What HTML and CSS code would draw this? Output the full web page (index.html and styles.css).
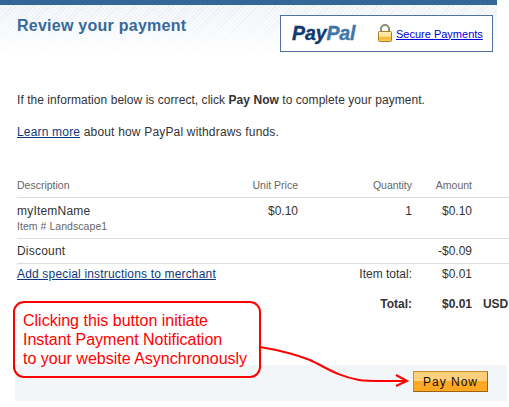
FILE: index.html
```html
<!DOCTYPE html>
<html lang="en">
<head>
<meta charset="utf-8">
<title>Review your payment</title>
<link rel="stylesheet" href="styles.css">
</head>
<body>
<div class="page">
  <header class="head">
    <h1>Review your payment</h1>
    <div class="brand">
      <span class="logo"><span class="pay">Pay</span><span class="pal">Pal</span></span>
      <svg class="lock" width="16" height="19" viewBox="0 0 16 19" aria-hidden="true">
        <defs>
          <linearGradient id="lk" x1="0" y1="0" x2="0" y2="1">
            <stop offset="0" stop-color="#fff0b8"/><stop offset=".5" stop-color="#fde08a"/>
            <stop offset=".55" stop-color="#f8b52c"/><stop offset="1" stop-color="#fbd060"/>
          </linearGradient>
        </defs>
        <path d="M4 8V5a4 4 0 0 1 8 0v3" fill="none" stroke="#8c8c78" stroke-width="2"/>
        <rect x="1.500" y="7.500" width="13" height="10" rx="1" fill="url(#lk)" stroke="#a8802c"/>
      </svg>
      <a class="secure" href="#">Secure Payments</a>
    </div>
  </header>
  <main class="body">
    <p class="intro">If the information below is correct, click <b>Pay Now</b> to complete your payment.</p>
    <p class="learn"><a href="#">Learn more</a> about how PayPal withdraws funds.</p>
    <div class="tbl">
      <div class="row hdr">
        <span>Description</span><span class="r">Unit Price</span><span class="r">Quantity</span><span class="r">Amount</span><span></span>
      </div>
      <div class="row item">
        <span><span class="name">myItemName</span><small>Item # Landscape1</small></span><span class="r">$0.10</span><span class="r">1</span><span class="r">$0.10</span><span></span>
      </div>
      <div class="row disc">
        <span class="name">Discount</span><span></span><span></span><span class="r">-$0.09</span><span></span>
      </div>
      <div class="row sub">
        <a class="note" href="#">Add special instructions to merchant</a><span></span><span class="r">Item total:</span><span class="r">$0.01</span><span></span>
      </div>
      <div class="row total">
        <span></span><span></span><span class="r">Total:</span><span class="r">$0.01</span><span class="usd">USD</span>
      </div>
    </div>
  </main>
  <footer class="band"><button class="paynow">Pay Now</button></footer>
  <div class="callout">Clicking this button initiate<br>Instant Payment Notification<br>to your website Asynchronously</div>
  <svg class="arrow" width="160" height="50" viewBox="0 0 160 50" aria-hidden="true">
    <path d="M1 1C25 5 38 9 51 14C68 22 78 30 100 34C108 35.500 118 35 148 35M137 29L148 35L137 40" fill="none" stroke="#f00" stroke-width="2"/>
  </svg>
</div>
</body>
</html>
```
FILE: styles.css
```css
* { box-sizing: border-box; }
html, body { margin: 0; padding: 0; background: #fff; }
body { font-family: "Liberation Sans", Arial, sans-serif; font-size: 12px; color: #333; }
.page { position: relative; width: 509px; height: 407px; overflow: hidden; }
.head {
  width: 497px; height: 56px; border-top: 5px solid #326798; padding: 10px 4px 0 17px;
  display: flex; justify-content: space-between; align-items: flex-start;
  background:
    linear-gradient(to bottom, rgba(255,255,255,0), #fff 100%),
    repeating-linear-gradient(135deg, #e6edf4 0 1px, #f6f8fb 1px 3px);
}
h1 { margin: 2px 0 0; font-size: 16px; line-height: 18px; font-weight: bold; color: #36699b; letter-spacing: .25px; }
.brand {
  width: 213px; height: 37px; border: 1px solid #4f6fa5; background: #fff;
  display: flex; align-items: center; padding-left: 11px;
}
.logo { font-size: 19.500px; font-weight: bold; font-style: italic; width: 85px; letter-spacing: -.1px; -webkit-text-stroke: .4px; }
.pay { color: #0f3a6e; }
.pal { color: #3f76a8; }
.lock { flex: none; margin-right: 3px; }
.secure { font-size: 11px; color: #0000e0; }
.intro { margin: 37px 0 0 17px; line-height: 14px; letter-spacing: .05px; }
.learn { margin: 18px 0 0 17px; line-height: 14px; letter-spacing: .18px; }
a { color: #0b3a7c; }
.tbl { margin-top: 40px; margin-left: 17px; }
.row { display: grid; grid-template-columns: 216px 65px 114px 60px 37px; border-bottom: 1px solid #ddd; }
.r { text-align: right; }
.hdr { height: 19px; font-size: 10.500px; color: #666; line-height: 12px; }
.item { height: 41px; padding-top: 6px; line-height: 15px; }
.name { letter-spacing: .2px; }
small { display: block; font-size: 10.500px; color: #666; line-height: 15px; letter-spacing: .05px; }
.disc { height: 25px; padding-top: 5px; line-height: 14px; }
.sub { height: 30px; border-bottom: 0; padding-top: 3px; line-height: 15px; }
.note { letter-spacing: .17px; white-space: nowrap; }
.total { height: 20px; border-bottom: 0; font-weight: bold; line-height: 20px; }
.usd { padding-left: 11px; letter-spacing: -.1px; }
.band { position: absolute; left: 15px; top: 365px; width: 492px; height: 36px; background: #f3f6f9; padding: 6px 0 0 398px; }
.paynow {
  display: block; width: 75px; height: 21px; padding: 0; margin: 0;
  border: 1px solid #c98d2a; border-right-color: #9a6410; border-bottom-color: #9a6410;
  background: linear-gradient(to bottom, #ffcf7c 0 50%, #ffa822 50% 100%);
  font: 12px "Liberation Sans", Arial, sans-serif; letter-spacing: 1px; color: #111;
}
.callout {
  position: absolute; left: 13px; top: 301px; width: 248px; height: 77px;
  border: 2px solid #f00; border-radius: 11px; padding: 8px 0 0 8px;
  font-size: 16px; line-height: 19px; color: #f00; white-space: nowrap;
}
.arrow { position: absolute; left: 259px; top: 346px; }
```
